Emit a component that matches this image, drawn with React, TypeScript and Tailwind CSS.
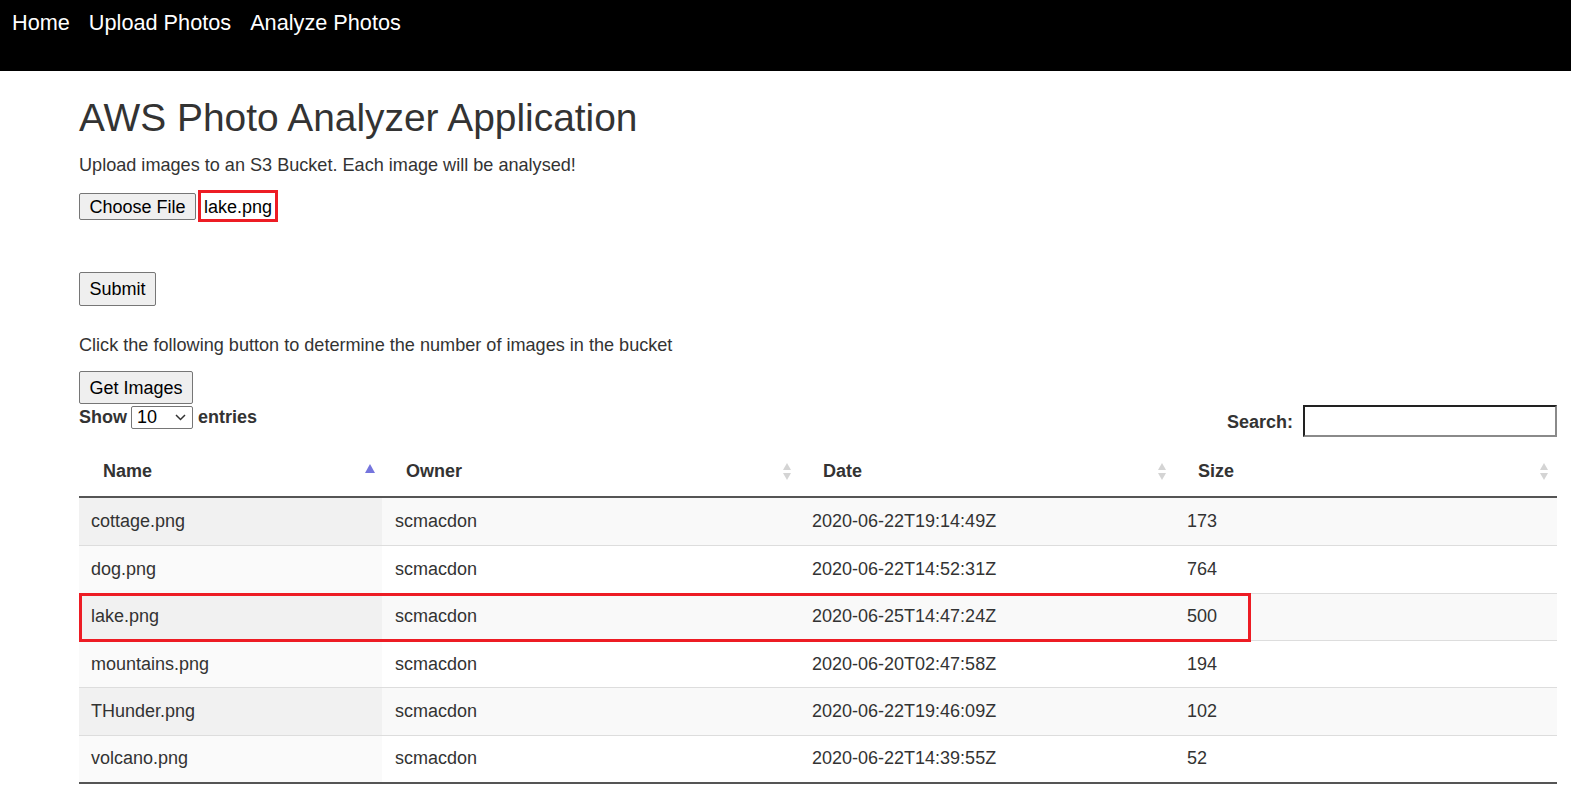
import React from "react";

const rows = [
  { name: "cottage.png", owner: "scmacdon", date: "2020-06-22T19:14:49Z", size: "173" },
  { name: "dog.png", owner: "scmacdon", date: "2020-06-22T14:52:31Z", size: "764" },
  { name: "lake.png", owner: "scmacdon", date: "2020-06-25T14:47:24Z", size: "500" },
  { name: "mountains.png", owner: "scmacdon", date: "2020-06-20T02:47:58Z", size: "194" },
  { name: "THunder.png", owner: "scmacdon", date: "2020-06-22T19:46:09Z", size: "102" },
  { name: "volcano.png", owner: "scmacdon", date: "2020-06-22T14:39:55Z", size: "52" },
];

function SortBoth() {
  return (
    <svg width="10" height="19" viewBox="0 0 10 19" className="shrink-0">
      <path d="M5 1 L9 8 L1 8 Z" fill="#d4d4d4" />
      <path d="M5 18 L9 11 L1 11 Z" fill="#d4d4d4" />
    </svg>
  );
}

function SortAsc() {
  return (
    <svg width="10" height="9" viewBox="0 0 10 9" className="shrink-0">
      <path d="M5 0 L10 9 L0 9 Z" fill="#7575dd" />
    </svg>
  );
}

const cols = "grid grid-cols-[303px_418px_375px_1fr]";

export default function App() {
  return (
    <div className="min-h-[790px] bg-white text-[#333] font-['Liberation_Sans',Arial,sans-serif]">
      <nav className="h-[71px] bg-black flex items-start gap-[19px] pl-[12px] pt-[9px]">
        <a className="text-white text-[21.7px] leading-[28px]">Home</a>
        <a className="text-white text-[21.7px] leading-[28px]">Upload Photos</a>
        <a className="text-white text-[21.7px] leading-[28px]">Analyze Photos</a>
      </nav>

      <div className="ml-[79px] mr-[14px] flex flex-col">
        <h1 className="mt-[25px] text-[38.9px] leading-[44px] font-normal text-[#333]">
          AWS Photo Analyzer Application
        </h1>
        <p className="mt-[14px] text-[18.1px] leading-[22px]">
          Upload images to an S3 Bucket. Each image will be analysed!
        </p>
        <div className="mt-[17px] flex items-center h-[27px]">
          <button className="h-[27px] w-[117px] bg-[#efefef] border border-[#767676] rounded-[2px] text-[18px] text-black leading-none">
            Choose File
          </button>
          <div className="relative ml-[8px] text-[18px] text-black leading-none">
            lake.png
            <div className="absolute -left-[6px] -top-[8px] w-[80px] h-[32px] border-[3px] border-[#ed1c24]" />
          </div>
        </div>
        <div className="mt-[52px]">
          <button className="h-[34px] w-[77px] bg-[#efefef] border border-[#767676] rounded-[2px] text-[18px] text-black leading-none">
            Submit
          </button>
        </div>
        <p className="mt-[28px] text-[18.1px] leading-[22px]">
          Click the following button to determine the number of images in the bucket
        </p>
        <div className="mt-[15px]">
          <button className="h-[33px] w-[114px] bg-[#efefef] border border-[#767676] rounded-[2px] text-[18px] text-black leading-none">
            Get Images
          </button>
        </div>

        <div className="flex justify-between items-start mt-[1px]">
          <div className="flex items-center h-[23px] text-[18px] font-bold mt-[1px]">
            <span>Show</span>
            <div className="ml-[4px] mr-[5px] h-[23px] w-[62px] border border-[#767676] rounded-[2px] flex items-center justify-between pl-[5px] pr-[6px] font-normal text-black">
              <span>10</span>
              <svg width="11" height="7" viewBox="0 0 11 7">
                <path d="M1 1 L5.5 5.5 L10 1" stroke="#333" strokeWidth="1.5" fill="none" />
              </svg>
            </div>
            <span>entries</span>
          </div>
          <div className="flex items-center text-[18px] font-bold">
            <span className="mr-[10px] mt-[2px]">Search:</span>
            <div className="h-[32px] w-[254px] border-2 border-t-[#222] border-l-[#222] border-r-[#8a8a8a] border-b-[#8a8a8a] bg-white" />
          </div>
        </div>

        <div className="mt-[10px] relative">
          <div className={`${cols} h-[51px] border-b-2 border-[#555] text-[18px] font-bold text-[#333]`}>
            <div className="flex items-center justify-between pl-[24px] pr-[7px]">
              <span>Name</span>
              <span className="self-start mt-[17px]"><SortAsc /></span>
            </div>
            <div className="flex items-center justify-between pl-[24px] pr-[8px]">
              <span>Owner</span>
              <SortBoth />
            </div>
            <div className="flex items-center justify-between pl-[23px] pr-[8px]">
              <span>Date</span>
              <SortBoth />
            </div>
            <div className="flex items-center justify-between pl-[23px] pr-[8px]">
              <span>Size</span>
              <SortBoth />
            </div>
          </div>
          {rows.map((r, i) => {
            const odd = i % 2 === 0;
            return (
              <div
                key={r.name}
                className={`${cols} h-[47.33px] text-[18px] text-[#333] ${i > 0 ? "border-t border-[#ddd]" : ""} ${odd ? "bg-[#f9f9f9]" : "bg-white"}`}
              >
                <div className={`flex items-center pl-[12px] ${odd ? "bg-[#f1f1f1]" : "bg-[#fafafa]"}`}>{r.name}</div>
                <div className="flex items-center pl-[13px]">{r.owner}</div>
                <div className="flex items-center pl-[12px]">{r.date}</div>
                <div className="flex items-center pl-[12px]">{r.size}</div>
              </div>
            );
          })}
          <div className="border-t-2 border-[#555]" />
          <div className="absolute left-0 top-[146px] w-[1172px] h-[49px] border-[3px] border-[#ed1c24] pointer-events-none" />
        </div>
      </div>
    </div>
  );
}
